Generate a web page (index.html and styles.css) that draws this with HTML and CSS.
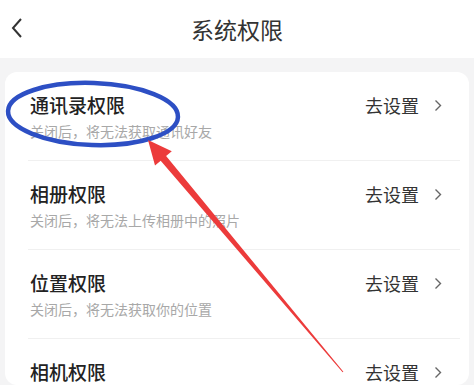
FILE: index.html
```html
<!DOCTYPE html>
<html>
<head>
	<meta charset="utf-8">
	<title>系统权限</title>
	<link rel="stylesheet" href="styles.css">
</head>
<body>
	<div class="header">
		<svg class="back" width="14" height="22" viewBox="0 0 14 22"><path d="M11 2 L3 11 L11 20" fill="none" stroke="#333" stroke-width="2"/></svg>
		<div class="title">系统权限</div>
	</div>
	<div class="card">
		<div class="row">
			<div class="info">
				<div class="name">通讯录权限</div>
				<div class="desc">关闭后，将无法获取通讯好友</div>
			</div>
			<div class="go">去设置<svg class="arrow" width="8" height="13" viewBox="0 0 8 13"><path d="M1.5 1.5 L6.5 6.5 L1.5 11.5" fill="none" stroke="#666" stroke-width="1.4"/></svg></div>
		</div>
		<div class="row">
			<div class="info">
				<div class="name">相册权限</div>
				<div class="desc">关闭后，将无法上传相册中的照片</div>
			</div>
			<div class="go">去设置<svg class="arrow" width="8" height="13" viewBox="0 0 8 13"><path d="M1.5 1.5 L6.5 6.5 L1.5 11.5" fill="none" stroke="#666" stroke-width="1.4"/></svg></div>
		</div>
		<div class="row">
			<div class="info">
				<div class="name">位置权限</div>
				<div class="desc">关闭后，将无法获取你的位置</div>
			</div>
			<div class="go">去设置<svg class="arrow" width="8" height="13" viewBox="0 0 8 13"><path d="M1.5 1.5 L6.5 6.5 L1.5 11.5" fill="none" stroke="#666" stroke-width="1.4"/></svg></div>
		</div>
		<div class="row last">
			<div class="info">
				<div class="name">相机权限</div>
			</div>
			<div class="go">去设置<svg class="arrow" width="8" height="13" viewBox="0 0 8 13"><path d="M1.5 1.5 L6.5 6.5 L1.5 11.5" fill="none" stroke="#666" stroke-width="1.4"/></svg></div>
		</div>
	</div>

	<!-- annotation drawn over the screenshot -->
	<svg class="marks" width="474" height="385" viewBox="0 0 474 385">
		<ellipse cx="93" cy="114" rx="85" ry="31" transform="rotate(2 93 114)" fill="none" stroke="#2d4fc4" stroke-width="4.5"/>
		<polygon fill="#ec3b3b" points="148,140 171.8,151.3 166.1,156.1 343.4,371.7 342.6,372.3 160.7,160.7 155,165.5"/>
	</svg>
</body>
</html>
```

FILE: styles.css
```css
*{
	margin: 0;
	padding: 0;
	box-sizing: border-box;
}

body{
	width: 474px;
	height: 385px;
	overflow: hidden;
	background-color: #f4f4f5;
	font-family: "Noto Sans CJK SC", "Noto Sans", sans-serif;
	position: relative;
}

.header{
	height: 58px;
	background-color: #fff;
	display: flex;
	align-items: center;
	justify-content: center;
	position: relative;
}

.back{
	position: absolute;
	left: 10px;
	top: 17px;
}

.title{
	font-size: 23px;
	color: #333;
	line-height: 30px;
	margin-top: -1px;
}

.card{
	margin: 14px 5px 0;
	background-color: #fff;
	border-radius: 12px;
}

.row{
	height: 89px;
	margin: 0 9px 0 23px;
	padding: 20px 18px 0 2px;
	display: flex;
	justify-content: space-between;
	align-items: flex-start;
	border-bottom: 1px solid #f0f0f0;
}

.row.last{
	height: 46px;
	border-bottom: none;
}

.name{
	font-size: 19px;
	font-weight: 500;
	color: #222;
	line-height: 26px;
}

.desc{
	font-size: 14px;
	color: #a8a8a8;
	line-height: 20px;
	margin-top: 3px;
}

.go{
	display: flex;
	align-items: center;
	font-size: 18px;
	color: #333;
	line-height: 26px;
}

.arrow{
	margin-left: 15px;
}

.marks{
	position: absolute;
	left: 0;
	top: 0;
}
```
